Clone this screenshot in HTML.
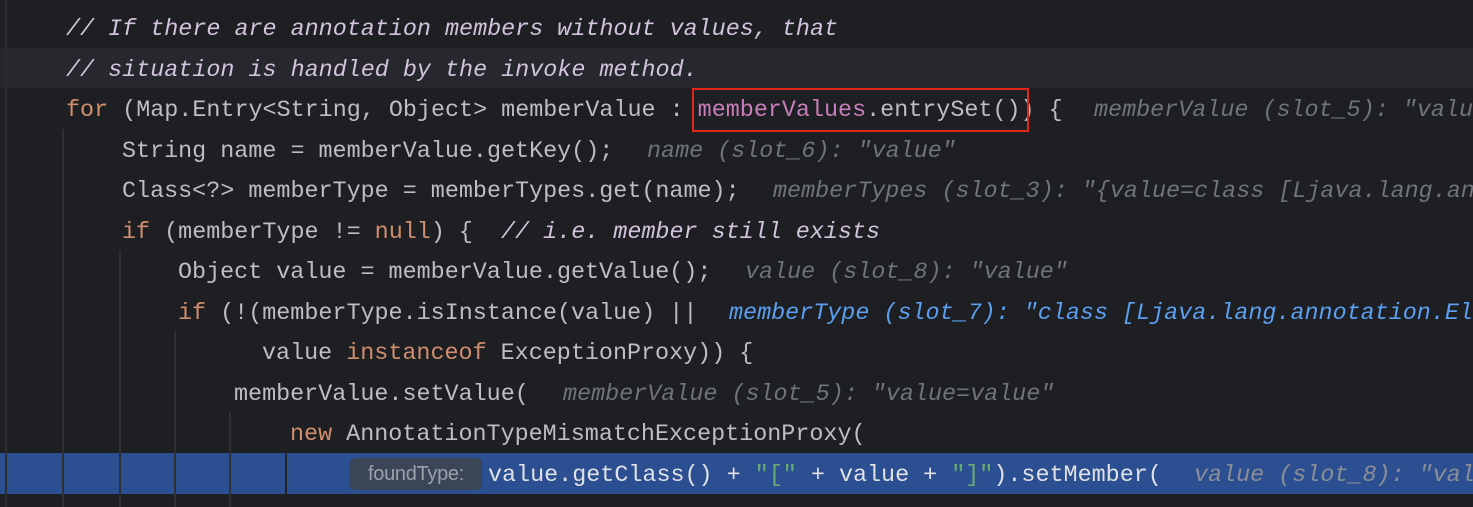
<!DOCTYPE html>
<html><head><meta charset="utf-8"><style>
html,body{margin:0;padding:0;width:1473px;height:507px;overflow:hidden;background:#1e1f22;}
#w{position:relative;width:1473px;height:507px;overflow:hidden;}
.l{position:absolute;left:0;width:1473px;height:40.4px;line-height:40.4px;margin-top:3px;font-family:"Liberation Mono",monospace;font-size:23.4px;color:#bcbec4;white-space:pre;}
.c{position:absolute;top:0;}
.cm{color:#d2c3dd;font-style:italic;}
.k{color:#cf8e6d;}
.p{color:#c77dbb;}
.s{color:#6aab73;}
.h{position:absolute;top:0;color:#6f737a;font-style:italic;}
.hb{position:absolute;top:0;color:#5a9ff0;font-style:italic;}
.g{position:absolute;width:2px;background:#2e3035;}
</style></head><body><div id="w">
<div style="position:absolute;left:0;top:47.5px;width:1473px;height:40.5px;background:#26282e"></div>
<div style="position:absolute;left:0;top:453px;width:1473px;height:40.5px;background:#2c4f91"></div>
<div class="g" style="left:5px;top:0;height:507px;background:#2b2d30"></div>
<div class="g" style="left:62px;top:129px;height:378px"></div>
<div class="g" style="left:119px;top:250px;height:257px"></div>
<div class="g" style="left:174px;top:331px;height:176px"></div>
<div class="g" style="left:229px;top:412px;height:95px"></div>
<div class="g" style="left:285px;top:453px;height:54px;background:#222"></div>

<div class="l" style="top:7px"><span class="c cm" style="left:66px">// If there are annotation members without values, that</span></div>
<div class="l" style="top:47.5px"><span class="c cm" style="left:66px">// situation is handled by the invoke method.</span></div>
<div class="l" style="top:88px"><span class="c" style="left:66px"><span class="k">for</span> (Map.Entry&lt;String, Object&gt; memberValue : <span class="p">memberValues</span>.entrySet()) {</span><span class="h" style="left:1094px">memberValue (slot_5): "value</span></div>
<div style="position:absolute;left:692px;top:88px;width:333px;height:40px;border:2px solid #e3261c;"></div>
<div class="l" style="top:129px"><span class="c" style="left:122px">String name = memberValue.getKey();</span><span class="h" style="left:647px">name (slot_6): "value"</span></div>
<div class="l" style="top:169px"><span class="c" style="left:122px">Class&lt;?&gt; memberType = memberTypes.get(name);</span><span class="h" style="left:773px">memberTypes (slot_3): "{value=class [Ljava.lang.ann</span></div>
<div class="l" style="top:210px"><span class="c" style="left:122px"><span class="k">if</span> (memberType != <span class="k">null</span>) {  <span class="cm">// i.e. member still exists</span></span></div>
<div class="l" style="top:250px"><span class="c" style="left:178px">Object value = memberValue.getValue();</span><span class="h" style="left:745px">value (slot_8): "value"</span></div>
<div class="l" style="top:291px"><span class="c" style="left:178px"><span class="k">if</span> (!(memberType.isInstance(value) ||</span><span class="hb" style="left:729px">memberType (slot_7): "class [Ljava.lang.annotation.Ele</span></div>
<div class="l" style="top:331px"><span class="c" style="left:262px">value <span class="k">instanceof</span> ExceptionProxy)) {</span></div>
<div class="l" style="top:372px"><span class="c" style="left:234px">memberValue.setValue(</span><span class="h" style="left:563px">memberValue (slot_5): "value=value"</span></div>
<div class="l" style="top:412px"><span class="c" style="left:290px"><span class="k">new</span> AnnotationTypeMismatchExceptionProxy(</span></div>
<div style="position:absolute;left:350px;top:458px;width:132px;height:32px;background:#3a4558;border-radius:5px;color:#9da0a8;font-family:'Liberation Sans',sans-serif;font-size:20px;line-height:32px;text-align:center;letter-spacing:-0.3px">foundType:</div>
<div class="l" style="top:453px;color:#dfe1e5"><span class="c" style="left:488px">value.getClass() + <span class="s">"["</span> + value + <span class="s">"]"</span>).setMember(</span><span class="h" style="left:1194px;color:#8a8e96">value (slot_8): "val</span></div>
</div></body></html>
